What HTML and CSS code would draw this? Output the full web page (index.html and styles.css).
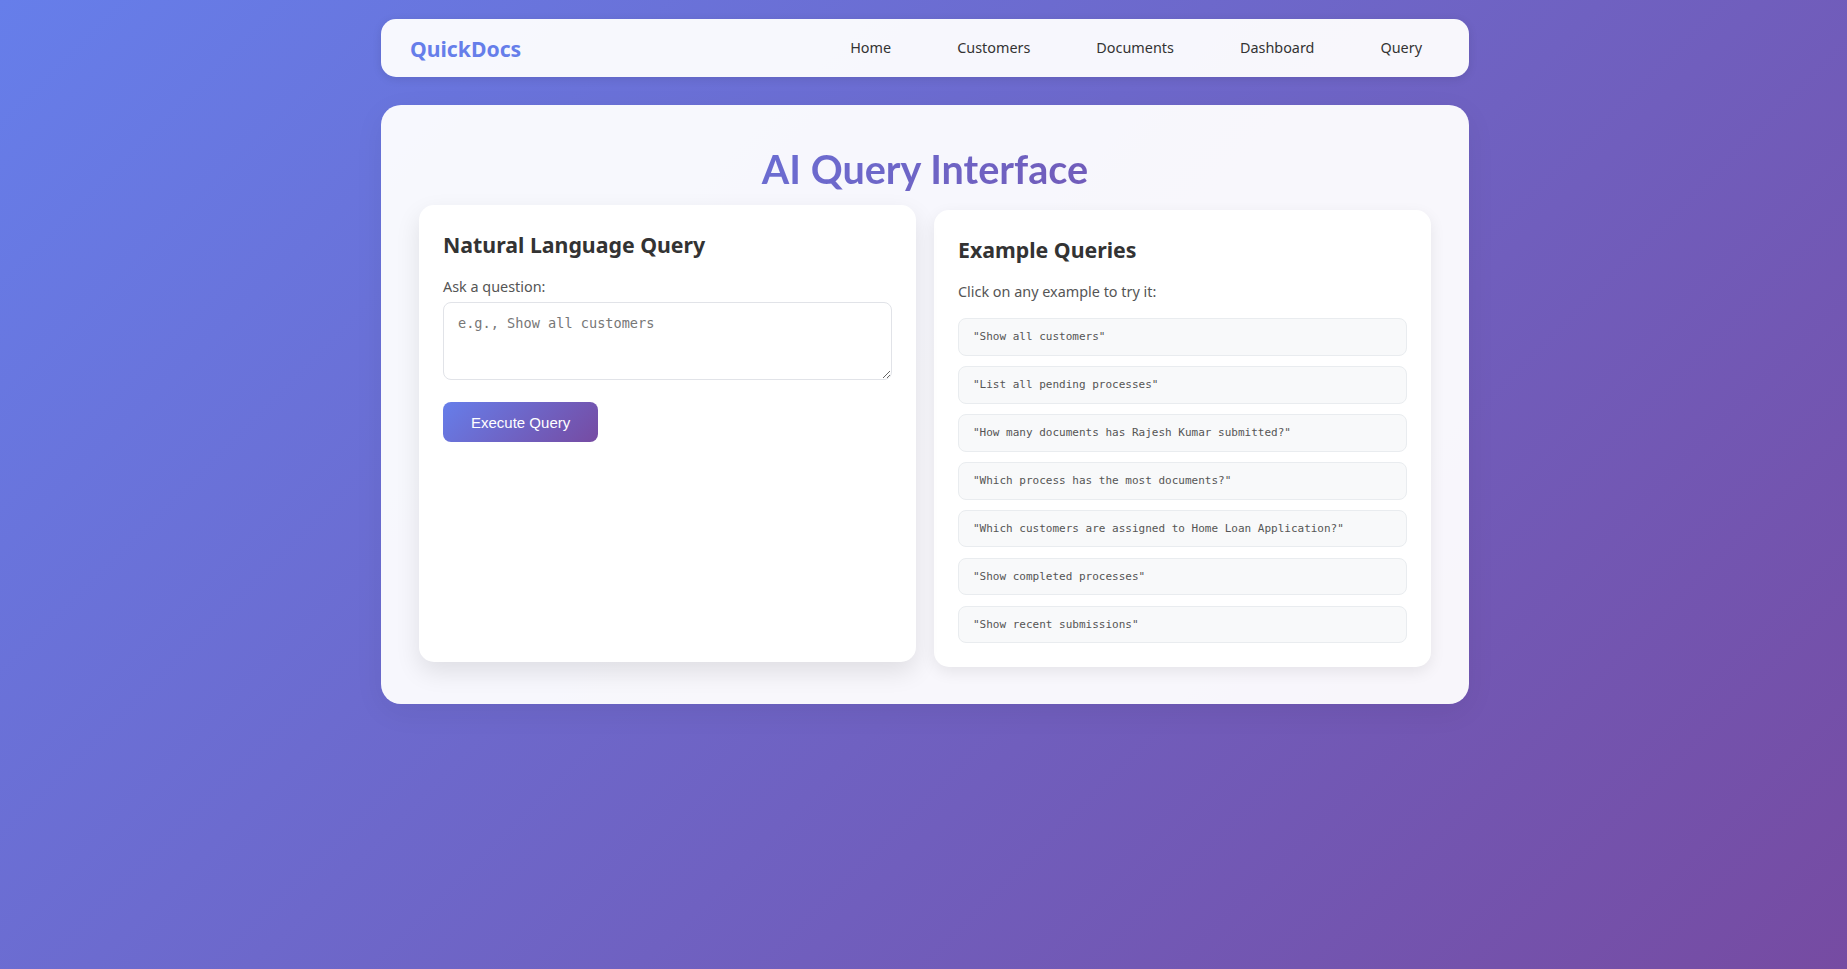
FILE: index.html
```html
<!DOCTYPE html>
<html lang="en">
<head>
<meta charset="utf-8">
<title>QuickDocs - AI Query</title>
<link rel="stylesheet" href="styles.css">
</head>
<body>
<div class="page">
  <nav class="navbar">
    <div class="logo">QuickDocs</div>
    <div class="nav-links">
      <a class="nav-link" href="#">Home</a>
      <a class="nav-link" href="#">Customers</a>
      <a class="nav-link" href="#">Documents</a>
      <a class="nav-link" href="#">Dashboard</a>
      <a class="nav-link" href="#">Query</a>
    </div>
  </nav>

  <main class="main">
    <h1 class="title">AI Query Interface</h1>
    <div class="cards">
      <section class="card card-hover">
        <h3 class="card-title">Natural Language Query</h3>
        <label class="field-label" for="q">Ask a question:</label>
        <textarea id="q" class="query-input" placeholder="e.g., Show all customers"></textarea>
        <button class="btn">Execute Query</button>
      </section>
      <section class="card">
        <h3 class="card-title">Example Queries</h3>
        <p class="hint">Click on any example to try it:</p>
        <div class="examples">
          <div class="example">"Show all customers"</div>
          <div class="example">"List all pending processes"</div>
          <div class="example">"How many documents has Rajesh Kumar submitted?"</div>
          <div class="example">"Which process has the most documents?"</div>
          <div class="example">"Which customers are assigned to Home Loan Application?"</div>
          <div class="example">"Show completed processes"</div>
          <div class="example">"Show recent submissions"</div>
        </div>
      </section>
    </div>
  </main>
</div>
</body>
</html>
```

FILE: styles.css
```css
* { box-sizing: border-box; }

html, body { height: 100%; }

body {
  margin: 0;
  min-height: 100vh;
  background: linear-gradient(135deg, #667eea 0%, #764ba2 100%);
  font-family: "Noto Sans", "Open Sans", sans-serif;
  color: #333;
}

.page {
  width: 1088px;
  margin-left: calc(50% - 542.5px);
  padding-top: 19px;
}

.navbar {
  height: 58px;
  display: flex;
  align-items: center;
  justify-content: space-between;
  padding: 0 31px 0 29px;
  background: rgba(255, 255, 255, 0.95);
  border-radius: 15px;
  box-shadow: 0 2px 10px rgba(0, 0, 0, 0.1);
}

.logo {
  font-size: 21.2px;
  font-weight: 700;
  color: #667eea;
}

.nav-links {
  display: flex;
  gap: 34px;
  margin-bottom: 2px;
}

.nav-link {
  padding: 8px 16px;
  font-size: 14.4px;
  color: #333;
  text-decoration: none;
}

.main {
  margin-top: 28px;
  padding: 40.4px 38px 37px;
  background: rgba(255, 255, 255, 0.95);
  border-radius: 20px;
  box-shadow: 0 8px 30px rgba(0, 0, 0, 0.06);
}

.title {
  margin: 0 0 16.6px;
  font-family: "Lato", "Noto Sans", sans-serif;
  font-size: 39.6px;
  line-height: 48px;
  font-weight: 700;
  text-align: center;
  background: linear-gradient(135deg, #667eea 0%, #764ba2 100%);
  -webkit-background-clip: text;
  background-clip: text;
  color: transparent;
}

.cards {
  display: grid;
  grid-template-columns: 1fr 1fr;
  gap: 18px;
  align-items: stretch;
}

.card {
  background: #fff;
  border-radius: 15px;
  padding: 25.5px 24px 24px;
  box-shadow: 0 5px 15px rgba(0, 0, 0, 0.08);
}

.card-hover {
  transform: translateY(-5px);
  box-shadow: 0 10px 25px rgba(0, 0, 0, 0.1);
}

.card-title {
  margin: 0 0 18px;
  font-size: 21.3px;
  font-weight: 700;
  color: #333;
}

.field-label {
  display: block;
  margin-bottom: 6px;
  font-size: 14.4px;
  color: #555;
}

.query-input {
  display: block;
  width: 100%;
  height: 78px;
  margin: 0 0 22px;
  padding: 12px 14px;
  border: 1px solid #e1e3e8;
  border-radius: 8px;
  font-family: "DejaVu Sans Mono", monospace;
  font-size: 13.6px;
  color: #333;
  background: #fff;
}

.query-input::placeholder { color: #777; }

.btn {
  height: 40px;
  padding: 0 28px;
  border: none;
  border-radius: 8px;
  background: linear-gradient(135deg, #667eea 0%, #764ba2 100%);
  color: #fff;
  font-family: "Liberation Sans", Arial, sans-serif;
  font-size: 15px;
  cursor: pointer;
}

.hint {
  margin: 0 0 16.9px;
  font-size: 14.4px;
  color: #555;
}

.examples {
  display: flex;
  flex-direction: column;
  gap: 10.4px;
}

.example {
  padding: 11px 14px;
  line-height: 13.5px;
  background: #f8f9fa;
  border: 1px solid #e9ecef;
  border-radius: 8px;
  font-family: "DejaVu Sans Mono", monospace;
  font-size: 11px;
  color: #555;
  cursor: pointer;
}
```
